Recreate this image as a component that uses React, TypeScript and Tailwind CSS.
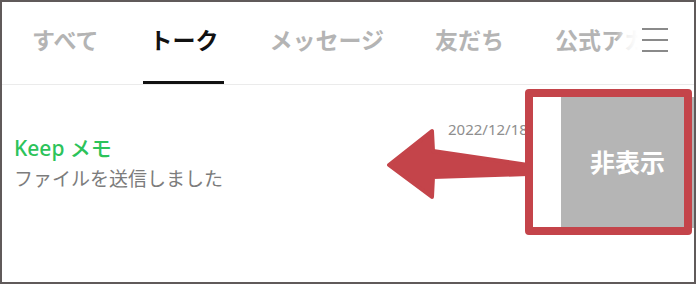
const tabs = [
  { label: "すべて", active: false },
  { label: "トーク", active: true },
  { label: "メッセージ", active: false },
  { label: "友だち", active: false },
  { label: "公式アカウント", active: false },
];

function Hamburger() {
  return (
    <div className="flex flex-col gap-[9px]">
      <span className="block h-[2px] w-[26px] bg-[#8a8a8a]" />
      <span className="block h-[2px] w-[26px] bg-[#8a8a8a]" />
      <span className="block h-[2px] w-[26px] bg-[#8a8a8a]" />
    </div>
  );
}

// the red swipe arrow drawn over the row
function SwipeArrow() {
  return (
    <svg
      className="pointer-events-none absolute left-0 top-0"
      width="696"
      height="284"
      viewBox="0 0 696 284"
    >
      <polygon
        points="387,163 430,129 431,149 526,163 526,172 431,175 430,195"
        fill="#c4444a"
        stroke="#c4444a"
        strokeWidth="4"
        strokeLinejoin="round"
      />
    </svg>
  );
}

export default function App() {
  return (
    <div className="relative h-[284px] w-[696px] overflow-hidden border-2 border-[#605a5a] bg-white font-['Noto_Sans','Noto_Sans_CJK_JP',sans-serif]">
      <div className="relative flex h-[83px] gap-[39px] overflow-hidden border-b border-[#ebebeb] pl-[24px]">
        {tabs.map((t) => (
          <div key={t.label} className="flex shrink-0 flex-col justify-between">
            <span
              className={
                "px-[6px] pt-[24px] text-[23px] leading-[28px] font-bold whitespace-nowrap " +
                (t.active ? "text-[#111111]" : "text-[#b4b4b4]")
              }
            >
              {t.label}
            </span>
            <span className={"block h-[3px] w-full " + (t.active ? "bg-[#111111]" : "bg-transparent")} />
          </div>
        ))}
        <div className="absolute right-0 top-0 flex h-full">
          <div className="h-full w-[22px] bg-gradient-to-r from-white/0 via-white/80 to-white" />
          <div className="h-full bg-white pt-[26px] pr-[26px] pl-[4px]">
            <Hamburger />
          </div>
        </div>
      </div>

      <div className="pt-[12px]">
        <div className="flex h-[131px]">
          <div className="relative flex flex-1 flex-col justify-center pl-[12px]">
            <div className="text-[21px] leading-[28px] font-medium text-[#2cc35a]">Keep メモ</div>
            <div className="mt-[4px] text-[19px] leading-[26px] text-[#7c7c7c]">ファイルを送信しました</div>
            <div className="absolute left-[446px] top-[22px] text-[15px] leading-[20px] whitespace-nowrap text-[#8e8e8e]">
              2022/12/18
            </div>
          </div>
          <div className="w-[26px] bg-white" />
          <div className="flex w-[133px] items-center justify-center bg-[#b5b5b5]">
            <span className="text-[25px] font-bold text-white">非表示</span>
          </div>
        </div>
      </div>

      <SwipeArrow />
      <div className="pointer-events-none absolute left-[523px] top-[87px] h-[146px] w-[167px] rounded-[4px] border-8 border-[#c4444a]" />
    </div>
  );
}
